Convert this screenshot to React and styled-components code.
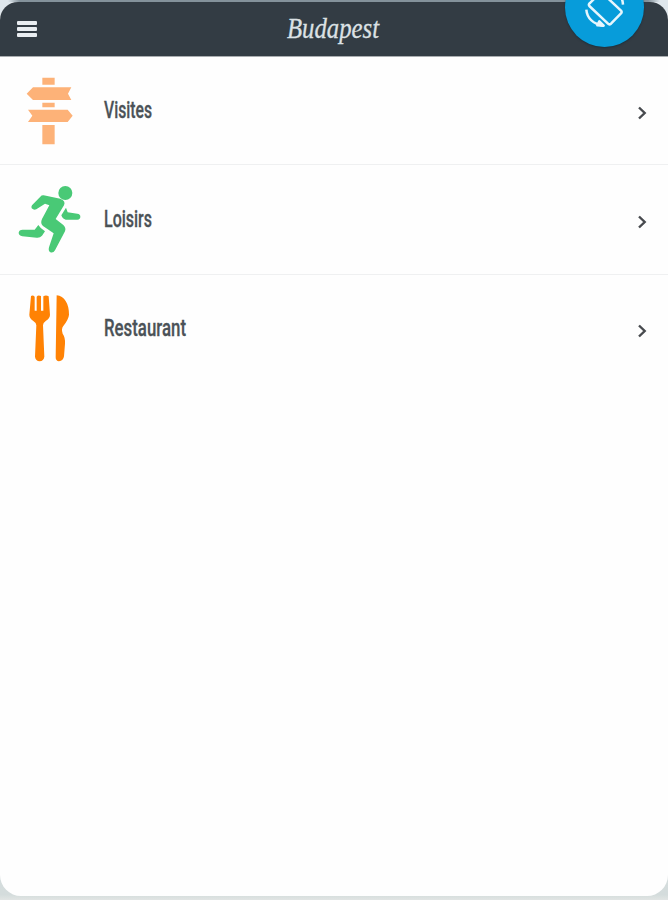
import React from 'react'
import styled, { createGlobalStyle } from 'styled-components'

const items = [
    { label: 'Visites', icon: <Signpost />, width: 48, height: 108 },
    { label: 'Loisirs', icon: <Runner />, width: 48, height: 110 },
    { label: 'Restaurant', icon: <Cutlery />, width: 82, height: 107 },
]

const App = () => {
    return (
        <Page>
            <GlobalStyle />
            <Screen>
                <Header>
                    <MenuButton aria-label="Menu">
                        <Bar />
                        <Bar />
                        <Bar />
                    </MenuButton>
                    <Title viewBox="0 0 96 40">
                        <text x="1" y="29" textLength="92" lengthAdjust="spacingAndGlyphs">Budapest</text>
                    </Title>
                </Header>
                <List>
                    {items.map((item) => (
                        <Row key={item.label} $height={item.height}>
                            <Icon>{item.icon}</Icon>
                            <Label $width={item.width} height="32">
                                <text x="0" y="23" textLength={item.width} lengthAdjust="spacingAndGlyphs">{item.label}</text>
                            </Label>
                            <Chevron viewBox="0 0 10 16">
                                <path d="M2 2.5 L7.7 8 L2 13.5" />
                            </Chevron>
                        </Row>
                    ))}
                </List>
            </Screen>
            <RotateButton aria-label="Rotation">
                <svg width="79" height="79" viewBox="45 -96 237 237">
                    <path d="M121 8 L149 -20 Q153 -24 158 -20 L213 32 Q217 36 213 40 L183 71 Q178 75 174 71 L118 18 Q114 13 121 8 Z" />
                    <path d="M109 29 C111 54 129 72 160 77" />
                    <path d="M148 64 L161 77 L142 76 Z" />
                    <path d="M219 14 C218 -7 205 -25 181 -32" />
                </svg>
            </RotateButton>
        </Page>
    );
}

export default App

function Signpost() {
    return (
        <svg viewBox="15 36 204 204" fill="#fdb278">
            <path d="M97 38H134V59H97Z M97 113H134V127H97Z M97 180H134V238H97Z" />
            <path d="M69 67H184L174 86L184 105H69L50 86Z" />
            <path d="M54 134H173L188 152L173 171H54L67 152Z" />
        </svg>
    )
}

function Runner() {
    return (
        <svg viewBox="15 46 204 204" fill="#49c976">
            <circle cx="166" cy="67" r="21" />
            <path d="M101 74 L151 84 Q168 90 162 104 L137 145 L160 163 Q169 171 165 182 L135 239 Q130 248 121 245 Q114 241 117 230 L131 188 L99 166 Q90 158 96 145 L118 104 L105 99 L79 116 Q71 119 65 113 Q63 108 66 104 L91 78 Q95 73 101 74Z" />
            <path d="M168 111 L173 125 L202 129 Q211 130 211 138 Q211 146 202 147 L167 147 Q158 145 154 134Z" />
            <path d="M85 163 Q90 172 105 182 L96 195 Q90 202 80 201 L37 197 Q26 194 26 186 Q27 177 38 177 L74 177Z" />
        </svg>
    )
}

function Cutlery() {
    return (
        <svg viewBox="15 44 204 204" fill="#ff8204">
            <path d="M63 47 Q69 43 74 49 V91 H80 V49 Q84 43 93 47 V91 H100 V48 Q108 43 116 48 L120 103 Q120 114 108 121 Q100 126 99 135 L103 229 Q101 242 89 243 Q77 242 75 229 L79 135 Q78 126 69 121 Q58 114 58 103 Z" />
            <path d="M140 45 C163 46 178 72 177 103 Q176 116 160 137 Q153 146 158 160 Q166 171 165 190 L162 228 Q160 242 147 243 Q137 242 137 231 Z" />
        </svg>
    )
}

const GlobalStyle = createGlobalStyle`
body {
  margin: 0;
  background: #d9dfdf;
}
`

const Page = styled.div`
  position: relative;
  height: 900px;
  overflow: hidden;
  box-sizing: border-box;
  padding-top: 2px;
  background: linear-gradient(to right, #dfe7ed 0, #dfe7ed 8px, #84929b 20px, #84929b 648px, #dfe7ed 660px) top / 100% 2px no-repeat,
    linear-gradient(#dfe7ed 50%, #d4dcdc 99.4%, #e1e5e4);
`

const Screen = styled.div`
  height: 894px;
  overflow: hidden;
  border-radius: 18px 18px 21px 21px;
  background: #fefefe;
`

const Header = styled.header`
  display: grid;
  grid-template-columns: 60px 1fr 60px;
  align-items: center;
  height: 54px;
  background: #333c44;
  border-bottom: 1px solid #a9adb0;
`

const MenuButton = styled.button`
  display: flex;
  flex-direction: column;
  gap: 2px;
  width: 20px;
  margin-left: 17px;
  padding: 0;
  border: none;
  background: none;
`

const Bar = styled.span`
  height: 4px;
  border-radius: 1px;
  background: #e9edf1;
`

const Title = styled.svg`
  justify-self: center;
  width: 96px;
  height: 40px;
  overflow: visible;
  font: italic 29px "Liberation Serif", serif;
  fill: #dce1e4;
  stroke: #dce1e4;
  stroke-width: 0.3;
`

const List = styled.div`
  display: flex;
  flex-direction: column;
`

const Row = styled.div`
  display: flex;
  align-items: center;
  box-sizing: border-box;
  height: ${(props) => props.$height}px;
  padding: 0 21px 0 15px;
  border-bottom: 1px solid #eff0f1;

  &:last-child {
    border-bottom: none;
  }
`

const Icon = styled.span`
  width: 68px;
  height: 68px;
  margin-right: 21px;

  svg {
    display: block;
  }
`

const Label = styled.svg`
  width: ${(props) => props.$width}px;
  overflow: visible;
  font: 500 23px Roboto, sans-serif;
  fill: #4b5257;
  stroke: #4b5257;
  stroke-width: 0.3;
`

const Chevron = styled.svg`
  width: 10px;
  height: 16px;
  margin: 4px 0 0 auto;
  fill: none;
  stroke: #474a4e;
  stroke-width: 2.4;
`

const RotateButton = styled.button`
  position: absolute;
  top: -32px;
  left: 565px;
  width: 79px;
  height: 79px;
  padding: 0;
  border: none;
  border-radius: 50%;
  background: #079cda;
  box-shadow: 0 1px 2px rgba(15, 40, 55, 0.6);

  svg {
    display: block;
    fill: none;
    stroke: #e6f6fd;
    stroke-width: 7.5;
    stroke-linejoin: round;
  }
`
